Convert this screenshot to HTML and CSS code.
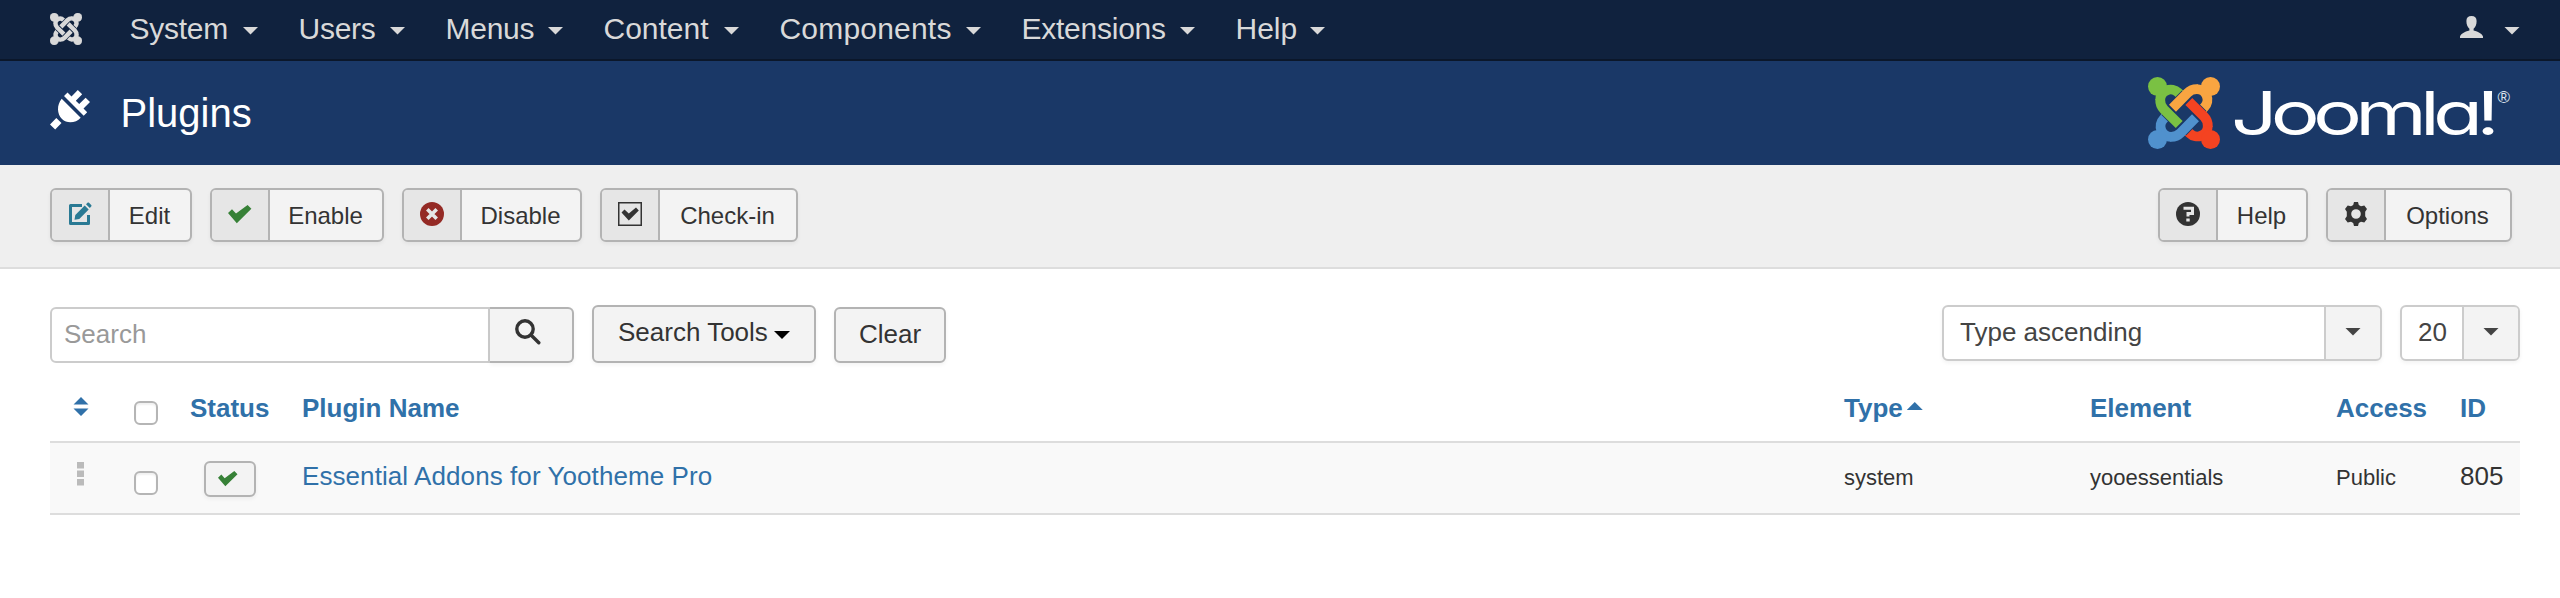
FILE: index.html
```html
<!DOCTYPE html>
<html lang="en">
<head>
<meta charset="utf-8">
<title>Plugins</title>
<link rel="stylesheet" href="styles.css">
</head>
<body>
<svg class="defs" width="0" height="0" aria-hidden="true">
  <defs>
    <path id="short-arm" d="M12.2 23.1A10.5 10.5 0 0 1 30.1 15.6L33 18.5" fill="none" stroke-width="9.8"/>
    <path id="long-arm" d="M12.2 22.5C12 27 13.5 30 16 32.5L31.2 47.5" fill="none" stroke-width="9.8"/>
    <path id="arm-gap" d="M17.5 34L31.9 48.2" fill="none"/>
    <path id="check" d="M0 8L4 4.2L8 8.6L19.6 0L23.4 3.8L8.8 18.2Z"/>
  </defs>
</svg>

<nav class="navbar">
  <svg class="brand-mark" viewBox="0 0 72 72">
    <g class="mono">
      <use href="#short-arm"/><use href="#short-arm" transform="rotate(90 36 36)"/><use href="#short-arm" transform="rotate(180 36 36)"/><use href="#short-arm" transform="rotate(270 36 36)"/>
    </g>
    <g class="mono-gap">
      <use href="#arm-gap"/><use href="#arm-gap" transform="rotate(90 36 36)"/><use href="#arm-gap" transform="rotate(180 36 36)"/><use href="#arm-gap" transform="rotate(270 36 36)"/>
    </g>
    <g class="mono">
      <use href="#long-arm"/><use href="#long-arm" transform="rotate(90 36 36)"/><use href="#long-arm" transform="rotate(180 36 36)"/><use href="#long-arm" transform="rotate(270 36 36)"/>
    </g>
    <g class="mono-dots"><circle cx="9.5" cy="9.5" r="9.5"/><circle cx="62.5" cy="9.5" r="9.5"/><circle cx="62.5" cy="62.5" r="9.5"/><circle cx="9.5" cy="62.5" r="9.5"/></g>
  </svg>
  <ul class="menu">
    <li class="menu-item w-system">System<i class="caret"></i></li>
    <li class="menu-item w-users">Users<i class="caret"></i></li>
    <li class="menu-item w-menus">Menus<i class="caret"></i></li>
    <li class="menu-item w-content">Content<i class="caret"></i></li>
    <li class="menu-item w-components">Components<i class="caret"></i></li>
    <li class="menu-item w-extensions">Extensions<i class="caret"></i></li>
    <li class="menu-item w-help">Help<i class="caret"></i></li>
  </ul>
  <div class="user">
    <svg class="user-icon" viewBox="0 0 23 22"><path d="M11.5 0C14.8 0 16.6 1.8 16.6 5C16.6 8.6 15.6 11 13.6 12.8V14.6C18.5 15.8 22 18 23 20.5V22H0V20.5C1 18 4.500 15.800 9.400 14.600V12.800C7.400 11 6.400 8.600 6.400 5C6.400 1.800 8.200 0 11.500 0Z"/></svg>
    <i class="caret"></i>
  </div>
</nav>

<header class="header">
  <svg class="plug" viewBox="0 0 40 40"><path d="M0 34.500L6.300 28L11.500 33L5.200 39.500ZM11.700 8.700L30.700 27.700C26 33 17 34 12 29C7 24 6.500 15 11.700 8.700ZM14 6L17.500 2.500L21.500 6.500L27.800 0L32.200 4.200L25.800 10.700L29.200 14.100L35.600 7.700L40 12L33.500 18.500L37.200 22.200L33.700 25.700Z"/></svg>
  <h1 class="title">Plugins</h1>
  <svg class="logo" viewBox="0 0 364 72">
    <g>
      <use href="#short-arm" class="s-green"/><use href="#short-arm" class="s-orange" transform="rotate(90 36 36)"/><use href="#short-arm" class="s-red" transform="rotate(180 36 36)"/><use href="#short-arm" class="s-blue" transform="rotate(270 36 36)"/>
    </g>
    <g class="logo-gap">
      <use href="#arm-gap"/><use href="#arm-gap" transform="rotate(90 36 36)"/><use href="#arm-gap" transform="rotate(180 36 36)"/><use href="#arm-gap" transform="rotate(270 36 36)"/>
    </g>
    <g>
      <use href="#long-arm" class="s-green"/><use href="#long-arm" class="s-orange" transform="rotate(90 36 36)"/><use href="#long-arm" class="s-red" transform="rotate(180 36 36)"/><use href="#long-arm" class="s-blue" transform="rotate(270 36 36)"/>
    </g>
    <circle class="f-green" cx="9.500" cy="9.500" r="9.500"/><circle class="f-orange" cx="62.500" cy="9.500" r="9.500"/><circle class="f-red" cx="62.500" cy="62.500" r="9.500"/><circle class="f-blue" cx="9.500" cy="62.500" r="9.500"/>
    <text class="wordmark" x="83" y="58" textLength="262" lengthAdjust="spacingAndGlyphs">Joomla!</text>
    <text class="registered" x="349.500" y="25.500">®</text>
  </svg>
</header>

<div class="toolbar">
  <button class="btn tool t-edit"><span class="tool-icon"><svg class="ico" viewBox="0 0 24 24"><path class="edit-box" d="M14 3.500H2.500V21.500H20.500V13"/><path class="edit-pen" d="M6.500 17.800L7.300 13L16.700 3.600L20.700 7.500L11.300 17ZM18 2.300L19.500 .8C20 .3 20.500 .3 21 .8L23.200 3C23.700 3.500 23.700 4 23.200 4.500L21.800 6Z"/></svg></span><span class="tool-text">Edit</span></button>
  <button class="btn tool t-enable"><span class="tool-icon"><svg class="ico ico-check" viewBox="0 0 24 24"><use href="#check" y="3"/></svg></span><span class="tool-text">Enable</span></button>
  <button class="btn tool t-disable"><span class="tool-icon"><svg class="ico" viewBox="0 0 24 24"><circle class="stop" cx="12" cy="12" r="12"/><path class="stop-x" d="M7.300 7.300L16.700 16.700M16.700 7.300L7.300 16.700"/></svg></span><span class="tool-text">Disable</span></button>
  <button class="btn tool t-checkin"><span class="tool-icon"><svg class="ico" viewBox="0 0 24 24"><rect class="box" x=".75" y=".75" width="22.500" height="22.500"/><path class="dark" d="M3.500 10.500L6.500 7.500L10.800 11.500L18 5.500L20.800 8.500L10.800 18.500Z"/></svg></span><span class="tool-text">Check-in</span></button>
  <button class="btn tool t-help"><span class="tool-icon"><svg class="ico" viewBox="0 0 24 24"><circle class="dark" cx="12" cy="12" r="12"/><path class="question" d="M7.500 6.300H16.500V11.600H12V14.600"/><rect class="question-dot" x="10.300" y="16.500" width="3.400" height="3"/></svg></span><span class="tool-text">Help</span></button>
  <button class="btn tool t-options"><span class="tool-icon"><svg class="ico" viewBox="0 0 24 24"><path class="dark" fill-rule="evenodd" d="M10 0H14L14.800 3L17 4.200L20.300 3.400L23 7L21.200 9.800V14.200L23 17L20.300 20.600L17 19.800L14.800 21L14 24H10L9.200 21L7 19.800L3.700 20.600L1 17L2.800 14.200V9.800L1 7L3.700 3.400L7 4.200L9.200 3ZM12 7.200A4.800 4.800 0 1 0 12 16.800A4.800 4.800 0 1 0 12 7.200Z"/></svg></span><span class="tool-text">Options</span></button>
</div>

<main class="content">
  <div class="filters">
    <div class="search">
      <input class="search-input" type="text" placeholder="Search">
      <button class="btn search-btn"><svg class="search-icon" viewBox="0 0 26 26"><circle cx="10" cy="10" r="8.200"/><path d="M16 16L23.800 23.800"/></svg></button>
    </div>
    <button class="btn search-tools">Search Tools<i class="caret"></i></button>
    <button class="btn clear">Clear</button>
    <div class="select order"><span class="select-text">Type ascending</span><span class="select-arrow"><i class="caret"></i></span></div>
    <div class="select limit"><span class="select-text">20</span><span class="select-arrow"><i class="caret"></i></span></div>
  </div>

  <div class="table">
    <div class="row head">
      <span class="cell"><svg class="sort" viewBox="0 0 16 20"><path d="M8 0L15.500 7.500H.5ZM.5 11.500H15.500L8 19Z"/></svg></span>
      <span class="cell"><i class="checkbox"></i></span>
      <span class="cell">Status</span>
      <span class="cell">Plugin Name</span>
      <span class="cell">Type<i class="caret up"></i></span>
      <span class="cell">Element</span>
      <span class="cell">Access</span>
      <span class="cell">ID</span>
    </div>
    <div class="row body">
      <span class="cell"><svg class="handle" viewBox="0 0 7 24"><path d="M0 0H7V6.500H0ZM0 8.500H7V15H0ZM0 17H7V23.500H0Z"/></svg></span>
      <span class="cell"><i class="checkbox"></i></span>
      <span class="cell"><button class="btn state"><svg class="state-icon" viewBox="0 0 24 19"><use href="#check"/></svg></button></span>
      <span class="cell"><a class="link">Essential Addons for Yootheme Pro</a></span>
      <span class="cell small">system</span>
      <span class="cell small">yooessentials</span>
      <span class="cell small">Public</span>
      <span class="cell id">805</span>
    </div>
  </div>
</main>
</body>
</html>
```
FILE: styles.css
```css
* { box-sizing: border-box; }
body { margin: 0; height: 598px; background: #fff; color: #333; font: 26px/36px "Liberation Sans", Arial, sans-serif; overflow: hidden; }
.defs { position: absolute; }
button, input { font: inherit; color: inherit; margin: 0; }
svg { flex: none; }
.caret { display: block; flex: none; width: 16px; height: 8px; background: currentColor; clip-path: polygon(0 0, 100% 0, 50% 100%); }

/* Top navigation */
.navbar { display: flex; align-items: center; height: 61px; padding: 0 40px 2px 50px; background: #10223e; border-bottom: 2px solid #0b172a; color: #d9d9d9; font-size: 30px; line-height: 57px; }
.brand-mark { width: 32px; height: 32px; margin-top: 1px; }
.mono { stroke: #d9d9d9; }
.mono-gap { stroke: #10223e; stroke-width: 13; }
.mono-dots { fill: #d9d9d9; stroke: #d9d9d9; stroke-width: 1; }
.menu { display: flex; gap: 40px; margin: 0 0 0 47.5px; padding: 0; list-style: none; }
.menu-item { display: flex; align-items: center; justify-content: space-between; white-space: nowrap; letter-spacing: -.25px; }
.menu-item .caret, .user .caret { margin-top: 4px; }
.w-system { width: 129px; }
.w-users { width: 107px; }
.w-menus { width: 118px; }
.w-content { width: 136px; letter-spacing: 0; }
.w-components { width: 202px; letter-spacing: .2px; }
.w-extensions { width: 174px; }
.w-help { width: 90px; letter-spacing: 0; }
.user { display: flex; align-items: center; gap: 21px; margin-left: auto; }
.user-icon { width: 23px; height: 22px; margin-top: -3px; fill: #d9d9d9; }

/* Title bar */
.header { display: flex; align-items: center; height: 104px; padding: 0 48px 0 50px; background: #1a3867; color: #fff; }
.plug { width: 40px; height: 40px; margin-top: -7px; fill: #fff; }
.title { margin: 0 0 0 30.5px; font-size: 40px; font-weight: 400; line-height: 60px; }
.logo { width: 364px; height: 72px; margin-left: auto; }
.logo-gap { stroke: #1a3867; stroke-width: 11.5; }
.s-green { stroke: #7ac143; } .f-green { fill: #7ac143; }
.s-orange { stroke: #f9a541; } .f-orange { fill: #f9a541; }
.s-red { stroke: #f44321; } .f-red { fill: #f44321; }
.s-blue { stroke: #5091cd; } .f-blue { fill: #5091cd; }
.wordmark { font-family: Inter, "Liberation Sans", sans-serif; font-size: 60px; font-feature-settings: "cv11", "ss03"; letter-spacing: -5px; fill: #fff; }
.registered { font-size: 17px; fill: #dfe5ee; }

/* Action toolbar */
.btn { display: flex; align-items: center; padding: 0; background: #f3f3f3; border: 2px solid #b3b3b3; border-radius: 6px; box-shadow: 0 2px 4px rgba(0, 0, 0, .05); white-space: nowrap; }
.toolbar { display: flex; align-items: center; gap: 18px; height: 104px; padding: 0 48px 2px 50px; background: #efefef; border-bottom: 2px solid #ddd; font-size: 24px; }
.tool { flex: none; height: 54px; }
.t-edit { width: 142px; }
.t-enable { width: 174px; }
.t-disable { width: 180px; }
.t-checkin { width: 198px; }
.t-help { width: 150px; margin-left: auto; }
.t-options { width: 186px; }
.tool-icon { display: flex; flex: none; align-items: center; justify-content: center; width: 58px; height: 50px; padding: 0 1px 3px 0; background: #e6e6e6; border-right: 2px solid #b3b3b3; border-radius: 4px 0 0 4px; }
.tool-text { flex: 1; padding: 1px 1px 0 0; text-align: center; }
.ico { width: 24px; height: 24px; }
.ico-check { fill: #378137; }
.edit-box { fill: none; stroke: #2a7a94; stroke-width: 3; stroke-linejoin: round; }
.edit-pen { fill: #2a7a94; }
.stop { fill: #942a25; }
.stop-x { stroke: #e6e6e6; stroke-width: 3.6; }
.box { fill: none; stroke: #333; stroke-width: 1.5; }
.dark { fill: #333; }
.question { fill: none; stroke: #e6e6e6; stroke-width: 3; }
.question-dot { fill: #e6e6e6; }

/* Search and filters */
.content { padding: 36px 40px 0 50px; }
.filters { display: flex; align-items: flex-start; height: 70px; }
.search { display: flex; margin: 2px 18px 0 0; }
.search-input { width: 440px; height: 56px; padding: 0 12px 2px; background: #fff; border: 2px solid #ccc; border-radius: 6px 0 0 6px; outline: none; }
.search-input::placeholder { color: #999; opacity: 1; }
.search-btn { width: 84px; height: 56px; padding: 0 0 6px 25px; border-left: 0; border-radius: 0 6px 6px 0; }
.search-icon { width: 26px; height: 26px; fill: none; stroke: #333; stroke-width: 3.4; stroke-linecap: round; }
.search-tools { width: 224px; height: 58px; padding: 0 24px 4px; justify-content: space-between; }
.search-tools .caret { margin-top: 6px; color: #000; }
.clear { width: 112px; height: 56px; margin: 2px 0 0 18px; padding-bottom: 2px; justify-content: center; }
.select { display: flex; height: 56px; background: #fff; border: 2px solid #ccc; border-radius: 6px; box-shadow: 0 2px 4px rgba(0, 0, 0, .05); color: #444; overflow: hidden; }
.select-text { flex: 1; padding: 7px 0 0 16px; }
.select-arrow { display: flex; flex: none; align-items: center; justify-content: center; width: 54px; background: #f3f3f3; box-shadow: -2px 0 0 #ccc; }
.select-arrow .caret { margin-bottom: 3px; }
.order { width: 440px; margin-left: auto; }
.limit { width: 120px; margin-left: 18px; }

/* Plugin list */
.row { display: grid; grid-template-columns: 61px 70px 85px 1578px 246px 246px 124px 60px; align-items: center; }
.cell { display: flex; align-items: center; white-space: nowrap; }
.cell:first-child { justify-content: center; }
.cell:nth-child(2) { padding-left: 23px; }
.cell:nth-child(3) { padding-left: 9px; }
.cell:nth-child(4) { padding-left: 36px; }
.head { height: 66px; color: #3071a9; font-weight: 700; }
.body { height: 74px; background: #f9f9f9; border-top: 2px solid #ddd; border-bottom: 2px solid #ddd; }
.sort { width: 16px; height: 20px; margin-bottom: 3px; fill: #3071a9; }
.handle { width: 7px; height: 24px; margin-bottom: 8px; fill: #bbb; }
.checkbox { width: 24px; height: 24px; margin-top: 10px; background: #fff; border: 2px solid #b5b5b5; border-radius: 6px; box-shadow: inset 0 2px 2px rgba(0, 0, 0, .06); }
.up { margin: 0 0 4px 4px; clip-path: polygon(50% 0, 100% 100%, 0 100%); }
.state { flex: none; width: 52px; height: 36px; margin: 2px 0 0 14px; padding: 0 0 1px 12px; }
.state-icon { width: 20px; height: 16px; fill: #378137; }
.link { color: #3071a9; margin-top: -4px; letter-spacing: .08px; }
.small { font-size: 22px; }
.id { margin-top: -4px; }
```
